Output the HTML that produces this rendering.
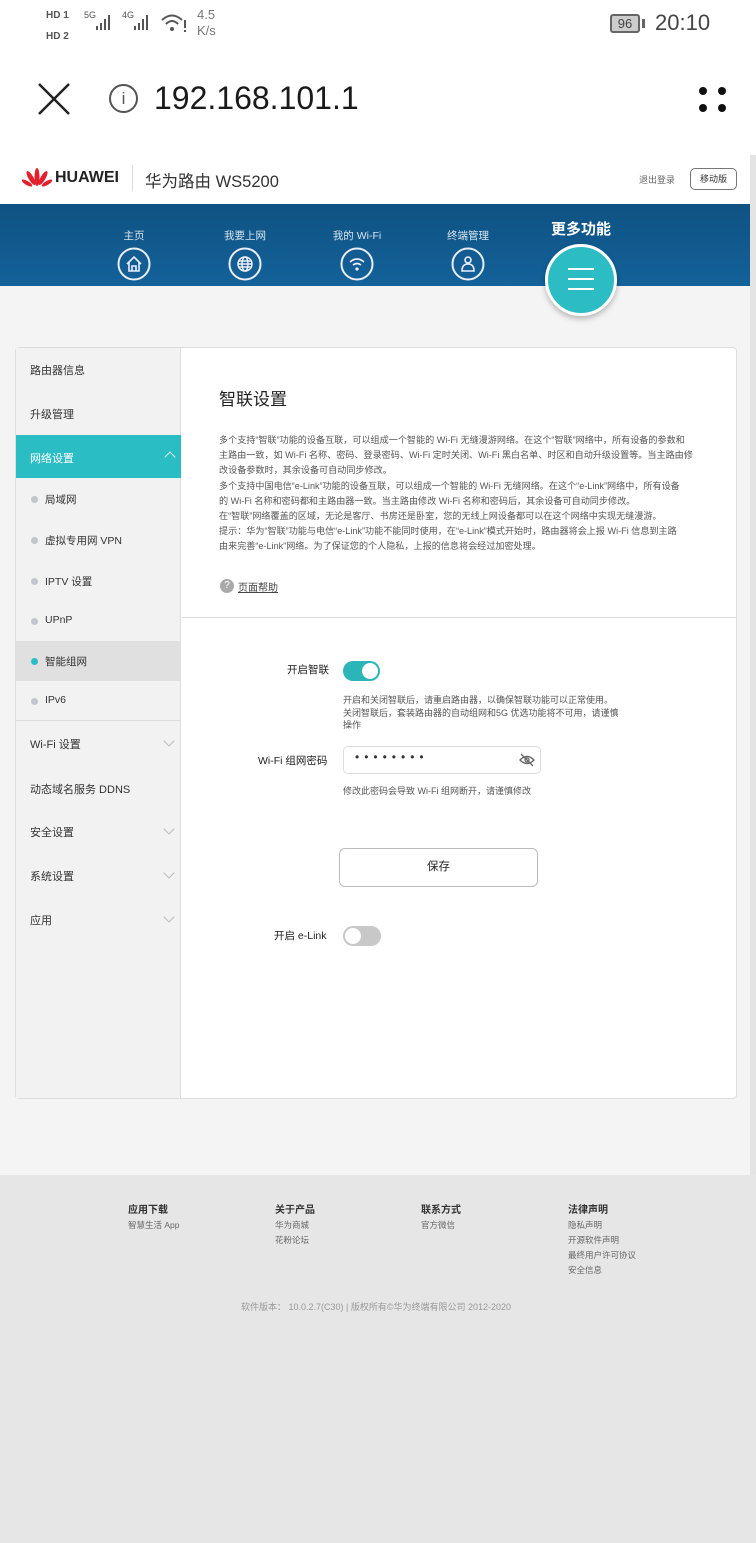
<!DOCTYPE html>
<html><head><meta charset="utf-8"><style>
*{margin:0;padding:0;box-sizing:border-box}
body{width:756px;height:1543px;position:relative;background:#fff;font-family:"Liberation Sans","Noto Sans CJK SC",sans-serif;color:#333;overflow:hidden}
.a{position:absolute;white-space:nowrap}
.nav{font-size:10.5px;color:#d8e4ee;transform:translateX(-50%)}
.ic{position:absolute;width:33px;height:33px;border:2px solid #e8eef4;border-radius:50%;transform:translate(-50%,-50%)}
.side{font-size:11px;color:#333}
.sub{font-size:10.5px;color:#333}
.dot{position:absolute;width:7px;height:7px;border-radius:50%;background:#c4c4cc}
.chev{position:absolute;width:8px;height:8px;border-right:1px solid #bbb;border-bottom:1px solid #bbb;transform:rotate(45deg)}
.p{font-size:9.1px;color:#555;line-height:15.2px}
.f h{font-size:10px;color:#333;font-weight:bold;display:block}
.f s{font-size:8.5px;color:#666;text-decoration:none;display:block;line-height:15px}
</style></head><body>
<div class="a" style="left:46px;top:5px;font-size:10px;font-weight:bold;color:#555;line-height:21px">HD 1<br>HD 2</div>
<div class="a" style="left:84px;top:10px;font-size:9px;color:#555">5G</div>
<svg class="a" style="left:94px;top:12px" width="26" height="20"><g fill="#555"><rect x="2" y="14" width="2" height="4"/><rect x="6" y="11" width="2" height="7"/><rect x="10" y="7" width="2" height="11"/><rect x="14" y="3" width="2" height="15"/></g></svg>
<div class="a" style="left:122px;top:10px;font-size:9px;color:#555">4G</div>
<svg class="a" style="left:132px;top:12px" width="26" height="20"><g fill="#555"><rect x="2" y="14" width="2" height="4"/><rect x="6" y="11" width="2" height="7"/><rect x="10" y="7" width="2" height="11"/><rect x="14" y="3" width="2" height="15"/></g></svg>
<svg class="a" style="left:160px;top:12px" width="28" height="22"><g fill="none" stroke="#555" stroke-width="2"><path d="M2 8 Q12 -1 22 8"/><path d="M6 12 Q12 6 18 12"/></g><circle cx="12" cy="17" r="2" fill="#555"/><rect x="24" y="8" width="2" height="8" fill="#555"/><rect x="24" y="18" width="2" height="2" fill="#555"/></svg>
<div class="a" style="left:197px;top:7px;font-size:13px;color:#777;line-height:16px">4.5<br>K/s</div>
<div class="a" style="left:610px;top:14px;width:30px;height:19px;border:2px solid #666;border-radius:3px;background:#ccc;font-size:13px;text-align:center;line-height:15px;color:#444">96</div>
<div class="a" style="left:642px;top:19px;width:3px;height:9px;background:#666"></div>
<div class="a" style="left:655px;top:10px;font-size:22px;color:#444">20:10</div>
<svg class="a" style="left:36px;top:82px" width="36" height="34"><path d="M3 2 L33 32 M33 2 L3 32" stroke="#222" stroke-width="2.5"/></svg>
<div class="a" style="left:109px;top:84px;width:29px;height:29px;border:2px solid #555;border-radius:50%;text-align:center;font-size:17px;line-height:25px;color:#555">i</div>
<div class="a" style="left:154px;top:80px;font-size:32px;color:#1a1a1a">192.168.101.1</div>
<div class="a" style="left:699px;top:87px;width:8px;height:8px;border-radius:50%;background:#111"></div>
<div class="a" style="left:718px;top:87px;width:8px;height:8px;border-radius:50%;background:#111"></div>
<div class="a" style="left:699px;top:104px;width:8px;height:8px;border-radius:50%;background:#111"></div>
<div class="a" style="left:718px;top:104px;width:8px;height:8px;border-radius:50%;background:#111"></div>
<div class="a" style="left:750px;top:155px;width:6px;height:1020px;background:#e4e4e4"></div>
<svg class="a" style="left:22px;top:167px" width="30" height="22"><g fill="#e4202c"><ellipse cx="15" cy="10" rx="2.5" ry="9"/><ellipse cx="9" cy="11" rx="2.5" ry="8" transform="rotate(-30 9 11)"/><ellipse cx="21" cy="11" rx="2.5" ry="8" transform="rotate(30 21 11)"/><ellipse cx="5" cy="16" rx="2" ry="6" transform="rotate(-60 5 16)"/><ellipse cx="25" cy="16" rx="2" ry="6" transform="rotate(60 25 16)"/></g></svg>
<div class="a" style="left:55px;top:169px;font-size:16px;font-weight:bold;color:#222">HUAWEI</div>
<div class="a" style="left:132px;top:165px;width:1px;height:26px;background:#ddd"></div>
<div class="a" style="left:145px;top:168px;font-size:16.5px;color:#333">华为路由 WS5200</div>
<div class="a" style="left:639px;top:173px;font-size:9px;color:#666">退出登录</div>
<div class="a" style="left:690px;top:168px;width:47px;height:22px;border:1px solid #777;border-radius:5px;font-size:9px;text-align:center;line-height:20px;color:#333">移动版</div>
<div class="a" style="left:0;top:204px;width:750px;height:82px;background:linear-gradient(180deg,#0f5282,#13629a)"></div>
<div class="a" style="left:0;top:286px;width:750px;height:889px;background:#f4f4f4"></div>
<div class="a nav" style="left:134px;top:228px">主页</div>
<div class="a nav" style="left:245px;top:228px">我要上网</div>
<div class="a nav" style="left:357px;top:228px">我的 Wi-Fi</div>
<div class="a nav" style="left:468px;top:228px">终端管理</div>
<div class="ic" style="left:134px;top:264px"></div>
<div class="ic" style="left:245px;top:264px"></div>
<div class="ic" style="left:357px;top:264px"></div>
<div class="ic" style="left:468px;top:264px"></div>
<svg class="a" style="left:122px;top:252px" width="24" height="24"><path d="M5 12 L12 5 L19 12 M7 10 V19 H17 V10 M10 19 V14 H14 V19" fill="none" stroke="#eef" stroke-width="1.6"/></svg>
<svg class="a" style="left:233px;top:252px" width="24" height="24"><g fill="none" stroke="#eef" stroke-width="1.5"><circle cx="12" cy="12" r="7"/><ellipse cx="12" cy="12" rx="3" ry="7"/><path d="M5 12H19M6 9H18M6 15H18"/></g></svg>
<svg class="a" style="left:345px;top:252px" width="24" height="24"><g fill="none" stroke="#eef" stroke-width="1.6"><path d="M5 10 Q12 4 19 10"/><path d="M8 13 Q12 10 16 13"/></g><circle cx="12" cy="17" r="1.6" fill="#eef"/></svg>
<svg class="a" style="left:456px;top:252px" width="24" height="24"><g fill="none" stroke="#eef" stroke-width="1.6"><circle cx="12" cy="8" r="3"/><path d="M6 19 Q6 12 12 12 Q18 12 18 19 Z"/></g></svg>
<div class="a" style="left:581px;top:218px;font-size:15px;font-weight:bold;color:#fff;transform:translateX(-50%)">更多功能</div>
<div class="a" style="left:545px;top:244px;width:72px;height:72px;border-radius:50%;background:#2cbcc4;border:3px solid #fff;box-shadow:0 3px 6px rgba(0,0,0,.25)"></div>
<div class="a" style="left:568px;top:268px;width:26px;height:2px;background:#fff;box-shadow:0 10px 0 #fff,0 20px 0 #fff"></div>
<div class="a" style="left:15px;top:347px;width:722px;height:752px;background:#fff;border:1px solid #ddd;border-radius:4px"></div>
<div class="a" style="left:16px;top:348px;width:165px;height:750px;background:#f2f2f2;border-right:1px solid #ddd"></div>
<div class="a side" style="left:30px;top:362px">路由器信息</div>
<div class="a side" style="left:30px;top:406px">升级管理</div>
<div class="a" style="left:16px;top:435px;width:165px;height:43px;background:#2bbdc4"></div>
<div class="a side" style="left:30px;top:450px;color:#fff">网络设置</div>
<div class="a" style="left:166px;top:453px;width:8px;height:8px;border-left:1px solid #d8f4f5;border-top:1px solid #d8f4f5;transform:rotate(45deg)"></div>
<div class="a" style="left:16px;top:641px;width:165px;height:40px;background:#e0e0e0"></div>
<div class="dot" style="left:31px;top:496px"></div><div class="a sub" style="left:45px;top:492px">局域网</div>
<div class="dot" style="left:31px;top:537px"></div><div class="a sub" style="left:45px;top:533px">虚拟专用网 VPN</div>
<div class="dot" style="left:31px;top:578px"></div><div class="a sub" style="left:45px;top:574px">IPTV 设置</div>
<div class="dot" style="left:31px;top:618px"></div><div class="a sub" style="left:45px;top:614px">UPnP</div>
<div class="dot" style="left:31px;top:658px;background:#2bbdc4"></div><div class="a sub" style="left:45px;top:654px">智能组网</div>
<div class="dot" style="left:31px;top:698px"></div><div class="a sub" style="left:45px;top:694px">IPv6</div>
<div class="a" style="left:16px;top:720px;width:165px;height:1px;background:#ddd"></div>
<div class="a side" style="left:30px;top:736px">Wi-Fi 设置</div><div class="chev" style="left:165px;top:737px"></div>
<div class="a side" style="left:30px;top:781px">动态域名服务 DDNS</div>
<div class="a side" style="left:30px;top:824px">安全设置</div><div class="chev" style="left:165px;top:825px"></div>
<div class="a side" style="left:30px;top:868px">系统设置</div><div class="chev" style="left:165px;top:869px"></div>
<div class="a side" style="left:30px;top:912px">应用</div><div class="chev" style="left:165px;top:913px"></div>
<div class="a" style="left:219px;top:385px;font-size:17px;color:#222">智联设置</div>
<div class="a p" style="left:219px;top:433px">多个支持“智联”功能的设备互联，可以组成一个智能的 Wi-Fi 无缝漫游网络。在这个“智联”网络中，所有设备的参数和<br>主路由一致，如 Wi-Fi 名称、密码、登录密码、Wi-Fi 定时关闭、Wi-Fi 黑白名单、时区和自动升级设置等。当主路由修<br>改设备参数时，其余设备可自动同步修改。<br>多个支持中国电信“e-Link”功能的设备互联，可以组成一个智能的 Wi-Fi 无缝网络。在这个“e-Link”网络中，所有设备<br>的 Wi-Fi 名称和密码都和主路由器一致。当主路由修改 Wi-Fi 名称和密码后，其余设备可自动同步修改。<br>在“智联”网络覆盖的区域，无论是客厅、书房还是卧室，您的无线上网设备都可以在这个网络中实现无缝漫游。<br>提示：华为“智联”功能与电信“e-Link”功能不能同时使用，在“e-Link”模式开始时，路由器将会上报 Wi-Fi 信息到主路<br>由来完善“e-Link”网络。为了保证您的个人隐私，上报的信息将会经过加密处理。</div>
<div class="a" style="left:220px;top:579px;width:14px;height:14px;border-radius:50%;background:#aaa;color:#fff;font-size:10px;text-align:center;line-height:14px">?</div>
<div class="a" style="left:238px;top:579px;font-size:10px;color:#444;text-decoration:underline">页面帮助</div>
<div class="a" style="left:182px;top:617px;width:555px;height:1px;background:#ddd"></div>
<div class="a" style="left:287px;top:662px;font-size:10.5px;color:#222">开启智联</div>
<div class="a" style="left:343px;top:661px;width:37px;height:20px;border-radius:10px;background:#2bb5b8"></div>
<div class="a" style="left:362px;top:663px;width:16px;height:16px;border-radius:50%;background:#fff"></div>
<div class="a" style="left:343px;top:694px;font-size:9px;color:#555;line-height:12.5px">开启和关闭智联后，请重启路由器，以确保智联功能可以正常使用。<br>关闭智联后，套装路由器的自动组网和5G 优选功能将不可用，请谨慎<br>操作</div>
<div class="a" style="left:258px;top:753px;font-size:10.5px;color:#222">Wi-Fi 组网密码</div>
<div class="a" style="left:343px;top:746px;width:198px;height:28px;border:1px solid #ddd;border-radius:5px"></div>
<div class="a" style="left:355px;top:750px;font-size:12px;letter-spacing:5px;color:#333">••••••••</div>
<svg class="a" style="left:518px;top:752px" width="18" height="16"><g fill="none" stroke="#666" stroke-width="1.3"><path d="M2 8 Q9 1 16 8 Q9 15 2 8Z"/><circle cx="9" cy="8" r="2"/><path d="M3 2 L15 14"/></g></svg>
<div class="a" style="left:343px;top:784px;font-size:9px;color:#555">修改此密码会导致 Wi-Fi 组网断开，请谨慎修改</div>
<div class="a" style="left:339px;top:848px;width:199px;height:39px;border:1px solid #bbb;border-radius:6px;text-align:center;line-height:37px;font-size:11.5px;color:#222">保存</div>
<div class="a" style="left:274px;top:928px;font-size:10.5px;color:#222">开启 e-Link</div>
<div class="a" style="left:343px;top:926px;width:38px;height:20px;border-radius:10px;background:#c8c8c8"></div>
<div class="a" style="left:345px;top:928px;width:16px;height:16px;border-radius:50%;background:#fff"></div>
<div class="a" style="left:0;top:1175px;width:756px;height:368px;background:#e6e6e6"></div>
<div class="a f" style="left:128px;top:1201px"><h>应用下载</h><s style="margin-top:2px">智慧生活 App</s></div>
<div class="a f" style="left:275px;top:1201px"><h>关于产品</h><s style="margin-top:2px">华为商城</s><s>花粉论坛</s></div>
<div class="a f" style="left:421px;top:1201px"><h>联系方式</h><s style="margin-top:2px">官方微信</s></div>
<div class="a f" style="left:568px;top:1201px"><h>法律声明</h><s style="margin-top:2px">隐私声明</s><s>开源软件声明</s><s>最终用户许可协议</s><s>安全信息</s></div>
<div class="a" style="left:241px;top:1300px;font-size:9px;color:#999">软件版本： 10.0.2.7(C30) | 版权所有©华为终端有限公司 2012-2020</div>
</body></html>
